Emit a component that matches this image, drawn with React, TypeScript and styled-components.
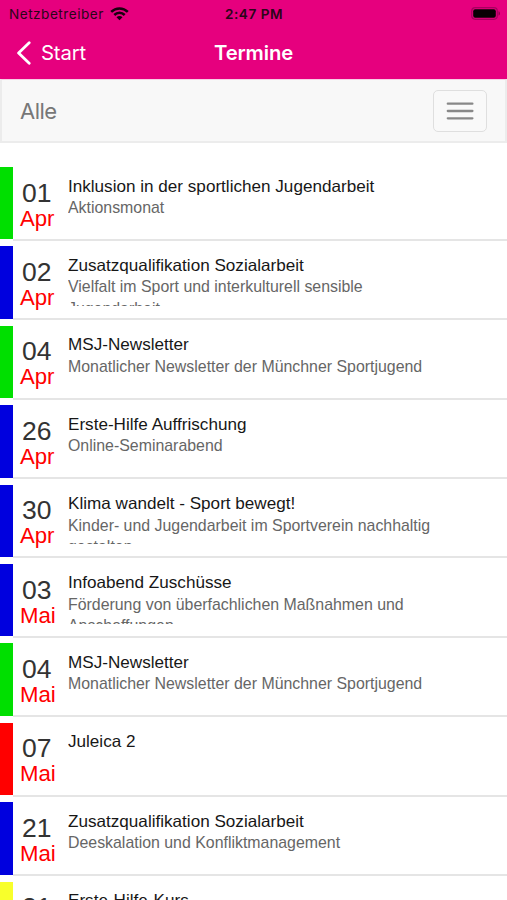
import React from "react";
import styled, { createGlobalStyle } from "styled-components";

const GlobalStyle = createGlobalStyle`
  * { box-sizing: border-box; }
  html, body { margin: 0; height: 900px; overflow: hidden; background: #fff; }
  body { font-family: "Liberation Sans", Arial, sans-serif; }
`;

const Screen = styled.div`
  width: 507px;
  height: 900px;
  overflow: hidden;
  background: #fff;
`;

const Header = styled.header`
  height: 79px;
  background: #e6007e;
  font-family: Inter, sans-serif;
`;

const StatusBar = styled.div`
  display: grid;
  grid-template-columns: 1fr auto 1fr;
  align-items: center;
  height: 27px;
  padding: 0 6px 0 9px;
  color: #2b0519;
  font-size: 13.6px;
`;

const Carrier = styled.div`
  display: flex;
  align-items: center;
  gap: 6px;
  letter-spacing: 0.5px;
`;

const Clock = styled.div`
  font-weight: 600;
  letter-spacing: 0.5px;
  transform: translateX(-1px);
`;

const Battery = styled.div`
  display: flex;
  justify-content: flex-end;
`;

const NavBar = styled.nav`
  display: grid;
  grid-template-columns: 1fr auto 1fr;
  align-items: center;
  height: 51px;
  padding: 0 16px;
  color: #fff;
  font-size: 20.3px;
`;

const BackLink = styled.div`
  display: flex;
  align-items: center;
  gap: 9px;
  letter-spacing: -0.15px;
`;

const PageTitle = styled.div`
  font-weight: 600;
  letter-spacing: -0.15px;
`;

const FilterBar = styled.div`
  display: flex;
  align-items: center;
  justify-content: space-between;
  height: 64px;
  padding: 0 18px;
  background: #f8f8f8;
  border: 2px solid #ececec;
  border-top: 1px solid #f7cfe4;
`;

const FilterLabel = styled.span`
  color: #777;
  font-family: Inter, sans-serif;
  font-size: 22px;
  letter-spacing: -0.5px;
`;

const MenuButton = styled.button`
  display: flex;
  flex-direction: column;
  align-items: center;
  justify-content: center;
  width: 54px;
  height: 42px;
  padding: 0;
  background: #f9f9f9;
  border: 1px solid #dfdfdf;
  border-radius: 5px;
`;

const EventList = styled.main`
  margin-top: 24px;
`;

const EventRow = styled.article`
  display: flex;
  height: 79.4px;
`;

const CategoryBar = styled.div<{ $color: string }>`
  flex: none;
  width: 13.3px;
  height: 72.4px;
  background: ${({ $color }) => $color};
`;

const EventContent = styled.div`
  display: flex;
  flex: 1;
  height: 73.8px;
  border-bottom: 2px solid #e5e5e5;
`;

const DateBlock = styled.div`
  width: 54.7px;
  padding: 11.6px 0 0 6.7px;
`;

const Day = styled.div`
  padding-left: 2px;
  color: #333;
  font-size: 26.5px;
  line-height: 28px;
`;

const Month = styled.div`
  color: #f00;
  font-size: 22.2px;
  line-height: 24px;
`;

const Description = styled.div`
  width: 385px;
  height: 59.8px;
  padding-top: 9.5px;
  overflow: hidden;
`;

const EventTitle = styled.div`
  color: #171717;
  font-size: 17.12px;
  line-height: 20px;
  white-space: nowrap;
`;

const Subtitle = styled.div`
  margin-top: 0.5px;
  color: #666;
  font-size: 15.9px;
  line-height: 21.2px;
`;

const green = "#00df00";
const blue = "#0000de";

const events = [
  { day: "01", month: "Apr", color: green, title: "Inklusion in der sportlichen Jugendarbeit", text: "Aktionsmonat" },
  { day: "02", month: "Apr", color: blue, title: "Zusatzqualifikation Sozialarbeit", text: "Vielfalt im Sport und interkulturell sensible Jugendarbeit" },
  { day: "04", month: "Apr", color: green, title: "MSJ-Newsletter", text: "Monatlicher Newsletter der Münchner Sportjugend" },
  { day: "26", month: "Apr", color: blue, title: "Erste-Hilfe Auffrischung", text: "Online-Seminarabend" },
  { day: "30", month: "Apr", color: blue, title: "Klima wandelt - Sport bewegt!", text: "Kinder- und Jugendarbeit im Sportverein nachhaltig gestalten" },
  { day: "03", month: "Mai", color: blue, title: "Infoabend Zuschüsse", text: "Förderung von überfachlichen Maßnahmen und Anschaffungen" },
  { day: "04", month: "Mai", color: green, title: "MSJ-Newsletter", text: "Monatlicher Newsletter der Münchner Sportjugend" },
  { day: "07", month: "Mai", color: "#ff0000", title: "Juleica 2", text: "" },
  { day: "21", month: "Mai", color: blue, title: "Zusatzqualifikation Sozialarbeit", text: "Deeskalation und Konfliktmanagement" },
  { day: "21", month: "Mai", color: "#f8ff2b", title: "Erste-Hilfe-Kurs", text: "" },
];

const WifiIcon = () => (
  <svg width="19" height="14" viewBox="0 0 19 14" fill="none" stroke="#190010" strokeWidth="2.5">
    <path d="M1.2 4.9C5.8.3 13.2.3 17.8 4.9" />
    <path d="M4.3 8C7.2 5.1 11.8 5.1 14.7 8" />
    <path d="M9.5 13.3 6.5 10.2c1.7-1.6 4.3-1.6 6 0z" fill="#190010" stroke="none" />
  </svg>
);

const BatteryIcon = () => (
  <svg width="30" height="13" viewBox="0 0 30 13">
    <rect x=".7" y=".7" width="25.6" height="11.6" rx="3.5" fill="none" stroke="#a80060" strokeWidth="1.2" />
    <rect x="2.2" y="2.2" width="22.6" height="8.6" rx="2" fill="#080004" />
    <path d="M27.5 4.3c2 .7 2 3.7 0 4.4z" fill="#93004f" />
  </svg>
);

const BackIcon = () => (
  <svg width="16" height="24" viewBox="0 0 16 24" fill="none" stroke="#fff" strokeWidth="2.8" strokeLinecap="round" strokeLinejoin="round">
    <path d="M13.2 1.8 2.6 12l10.6 10.2" />
  </svg>
);

const MenuIcon = () => (
  <svg width="28" height="20" viewBox="0 0 28 20" stroke="#888" strokeWidth="2.3" strokeLinecap="round">
    <path d="M1.8 2.7h24.6M1.8 10h24.6M1.8 17.3h24.6" />
  </svg>
);

export default function App() {
  return (
    <Screen>
      <GlobalStyle />
      <Header>
        <StatusBar>
          <Carrier>Netzbetreiber <WifiIcon /></Carrier>
          <Clock>2:47 PM</Clock>
          <Battery><BatteryIcon /></Battery>
        </StatusBar>
        <NavBar>
          <BackLink><BackIcon />Start</BackLink>
          <PageTitle>Termine</PageTitle>
        </NavBar>
      </Header>
      <FilterBar>
        <FilterLabel>Alle</FilterLabel>
        <MenuButton aria-label="Menü"><MenuIcon /></MenuButton>
      </FilterBar>
      <EventList>
        {events.map((event, index) => (
          <EventRow key={index}>
            <CategoryBar $color={event.color} />
            <EventContent>
              <DateBlock>
                <Day>{event.day}</Day>
                <Month>{event.month}</Month>
              </DateBlock>
              <Description>
                <EventTitle>{event.title}</EventTitle>
                <Subtitle>{event.text}</Subtitle>
              </Description>
            </EventContent>
          </EventRow>
        ))}
      </EventList>
    </Screen>
  );
}
